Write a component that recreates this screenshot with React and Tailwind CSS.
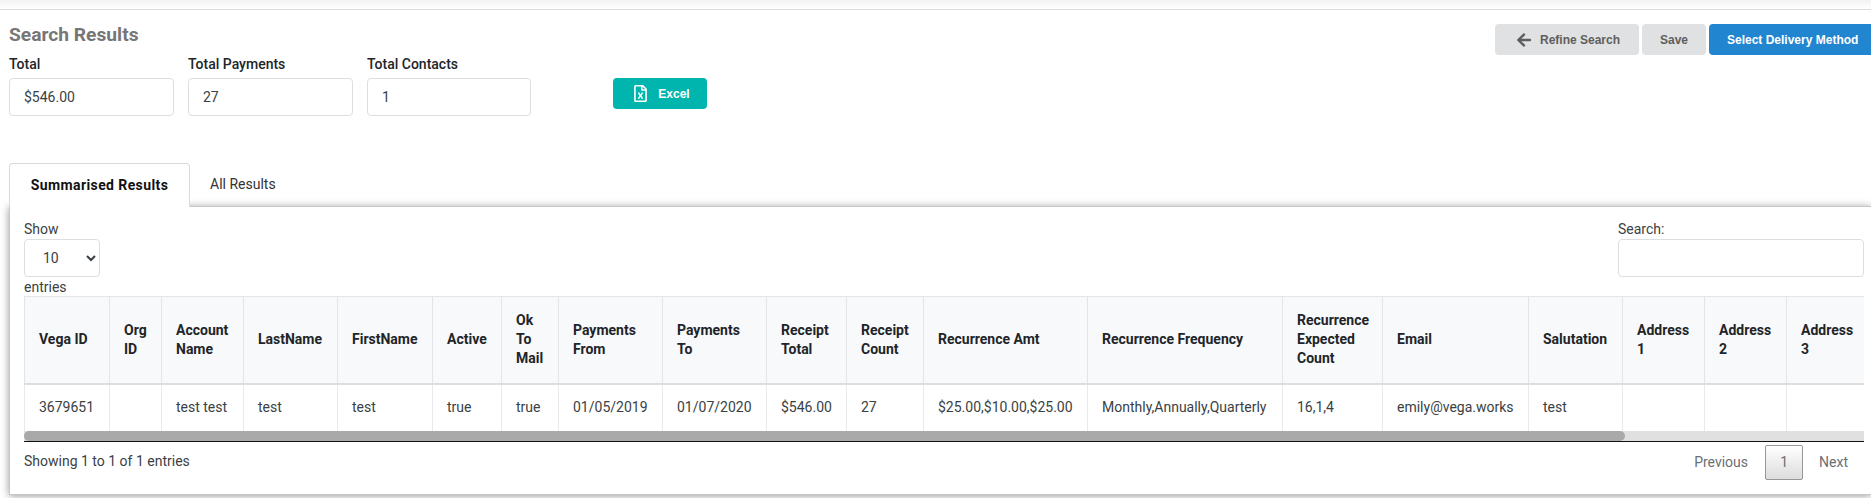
import React from 'react';
import { FaArrowLeft, FaRegFileExcel } from 'react-icons/fa';

const columns = [
  { width: 'w-[85px]', label: 'Vega ID', value: '3679651' },
  { width: 'w-[52px]', label: 'Org ID', value: '' },
  { width: 'w-[82px]', label: 'Account Name', value: 'test test' },
  { width: 'w-[94px]', label: 'LastName', value: 'test' },
  { width: 'w-[95px]', label: 'FirstName', value: 'test' },
  { width: 'w-[69px]', label: 'Active', value: 'true' },
  { width: 'w-[57px]', label: 'Ok To Mail', value: 'true' },
  { width: 'w-[104px]', label: 'Payments From', value: '01/05/2019' },
  { width: 'w-[104px]', label: 'Payments To', value: '01/07/2020' },
  { width: 'w-[80px]', label: 'Receipt Total', value: '$546.00' },
  { width: 'w-[77px]', label: 'Receipt Count', value: '27' },
  { width: 'w-[164px]', label: 'Recurrence Amt', value: '$25.00,$10.00,$25.00' },
  { width: 'w-[195px]', label: 'Recurrence Frequency', value: 'Monthly,Annually,Quarterly' },
  { width: 'w-[100px]', label: 'Recurrence Expected Count', value: '16,1,4' },
  { width: 'w-[146px]', label: 'Email', value: 'emily@vega.works' },
  { width: 'w-[94px]', label: 'Salutation', value: 'test' },
  { width: 'w-[82px]', label: 'Address 1', value: '' },
  { width: 'w-[82px]', label: 'Address 2', value: '' },
  { width: 'w-[82px]', label: 'Address 3', value: '' },
];

const summary = [
  { label: 'Total', value: '$546.00', width: 'w-[165px]' },
  { label: 'Total Payments', value: '27', width: 'w-[165px]' },
  { label: 'Total Contacts', value: '1', width: 'w-[164px]' },
];

const buttonBase = 'flex h-[31px] items-center justify-center rounded-[4px] font-["Liberation_Sans",sans-serif] text-[12px] font-bold';

const App = () => (
  <div className='h-[498px] w-[1871px] overflow-hidden bg-white font-["Roboto",sans-serif] text-[14px] text-[#212529]'>
    <div className="h-[10px] border-b border-[#dcdcdc] bg-gradient-to-b from-[#f3f3f3] to-white" />

    <div className="flex justify-between pl-[9px]">
      <div>
        <h1 className="mt-[13px] text-[19.2px] leading-[24px] font-bold text-[#767676]">Search Results</h1>
        <div className="mt-[7px] flex items-start">
          {summary.map((item) => (
            <div key={item.label} className={`mr-[14px] ${item.width}`}>
              <label className="block text-[14px] leading-[20px] font-medium">{item.label}</label>
              <input
                readOnly
                value={item.value}
                className="mt-[4px] h-[38px] w-full rounded-[4px] border border-[#dcdfe2] bg-white px-[14px] text-[14px] text-[#3a3f44] outline-none"
              />
            </div>
          ))}
          <button className={`${buttonBase} mt-[24px] ml-[68px] w-[94px] gap-[9px] bg-[#00b5ad] pl-[2px] text-white`}>
            <FaRegFileExcel className="text-[17px]" />
            Excel
          </button>
        </div>
      </div>

      <div className="mt-[14px] flex h-[31px] gap-[3px]">
        <button className={`${buttonBase} w-[144px] gap-[8px] bg-[#e0e1e2] pl-[2px] text-[#5e5e5e]`}>
          <FaArrowLeft className="text-[16px]" />
          Refine Search
        </button>
        <button className={`${buttonBase} w-[64px] bg-[#e0e1e2] text-[#5e5e5e]`}>Save</button>
        <button className={`${buttonBase} w-[162px] justify-start rounded-r-none bg-[#2185d0] pl-[18px] text-white`}>Select Delivery Method</button>
      </div>
    </div>

    <div className="mt-[47px] flex pl-[9px]">
      <div className="relative z-10 -mb-px flex h-[44px] w-[181px] items-center justify-center rounded-t-[4px] border border-b-0 border-[#d8dadd] bg-white text-[14px] font-bold tracking-[0.4px] text-[#111]">
        Summarised Results
      </div>
      <div className="flex h-[43px] items-center pl-[20px] text-[14px] text-[#333]">All Results</div>
    </div>

    <div className="ml-[9px] h-[289px] border-t border-b border-l border-[#c8c8c8] bg-white pt-[12px] pr-[7px] pl-[14px] shadow-[0_1px_8px_rgba(0,0,0,0.4)]">
      <div className="flex items-start justify-between text-[#3a3f44]">
        <div>
          <div className="leading-[20px]">Show</div>
          <select className="block h-[38px] w-[76px] rounded-[4px] border border-[#dcdfe2] bg-white pl-[14px] text-[14px] text-[#3a3f44] outline-none">
            <option>10</option>
          </select>
          <div className="h-[19px] leading-[20px]">entries</div>
        </div>
        <div>
          <div className="leading-[20px]">Search:</div>
          <input className="block h-[38px] w-[246px] rounded-[4px] border border-[#dcdfe2] bg-white outline-none" />
        </div>
      </div>

      <div className="overflow-hidden">
        <table className="w-[1844px] table-fixed border-collapse text-left">
          <colgroup>
            {columns.map((col) => (
              <col key={col.label} className={col.width} />
            ))}
          </colgroup>
          <thead>
            <tr className="h-[87px] bg-[#f8f9fa]">
              {columns.map((col) => (
                <th key={col.label} className="border border-b-2 border-[#e3e6e8] border-b-[#dedede] px-[14px] align-middle text-[14px] leading-[19px] font-bold text-[#212529]">
                  {col.label}
                </th>
              ))}
            </tr>
          </thead>
          <tbody>
            <tr className="h-[47px]">
              {columns.map((col) => (
                <td key={col.label} className="border-x border-[#e8eaec] px-[14px] align-middle whitespace-nowrap text-[#3a3f44]">
                  {col.value}
                </td>
              ))}
            </tr>
          </tbody>
        </table>
      </div>

      <div className="h-[10px] bg-[#e0e0e0]">
        <div className="h-full w-[1601px] rounded-[5px] bg-[#a9a9a9]" />
      </div>

      <div className="flex items-start justify-between border-t border-[#111] text-[#3a3f44]">
        <div className="pt-[9px] leading-[20px]">Showing 1 to 1 of 1 entries</div>
        <div className="flex items-center pt-[3px] pr-[16px] text-[#6b6f73]">
          <span>Previous</span>
          <span className="mr-[16px] ml-[17px] flex h-[35px] w-[38px] items-center justify-center rounded-[2px] border border-[#979797] bg-gradient-to-b from-white to-[#dcdcdc]">1</span>
          <span>Next</span>
        </div>
      </div>
    </div>
  </div>
);

export default App;
